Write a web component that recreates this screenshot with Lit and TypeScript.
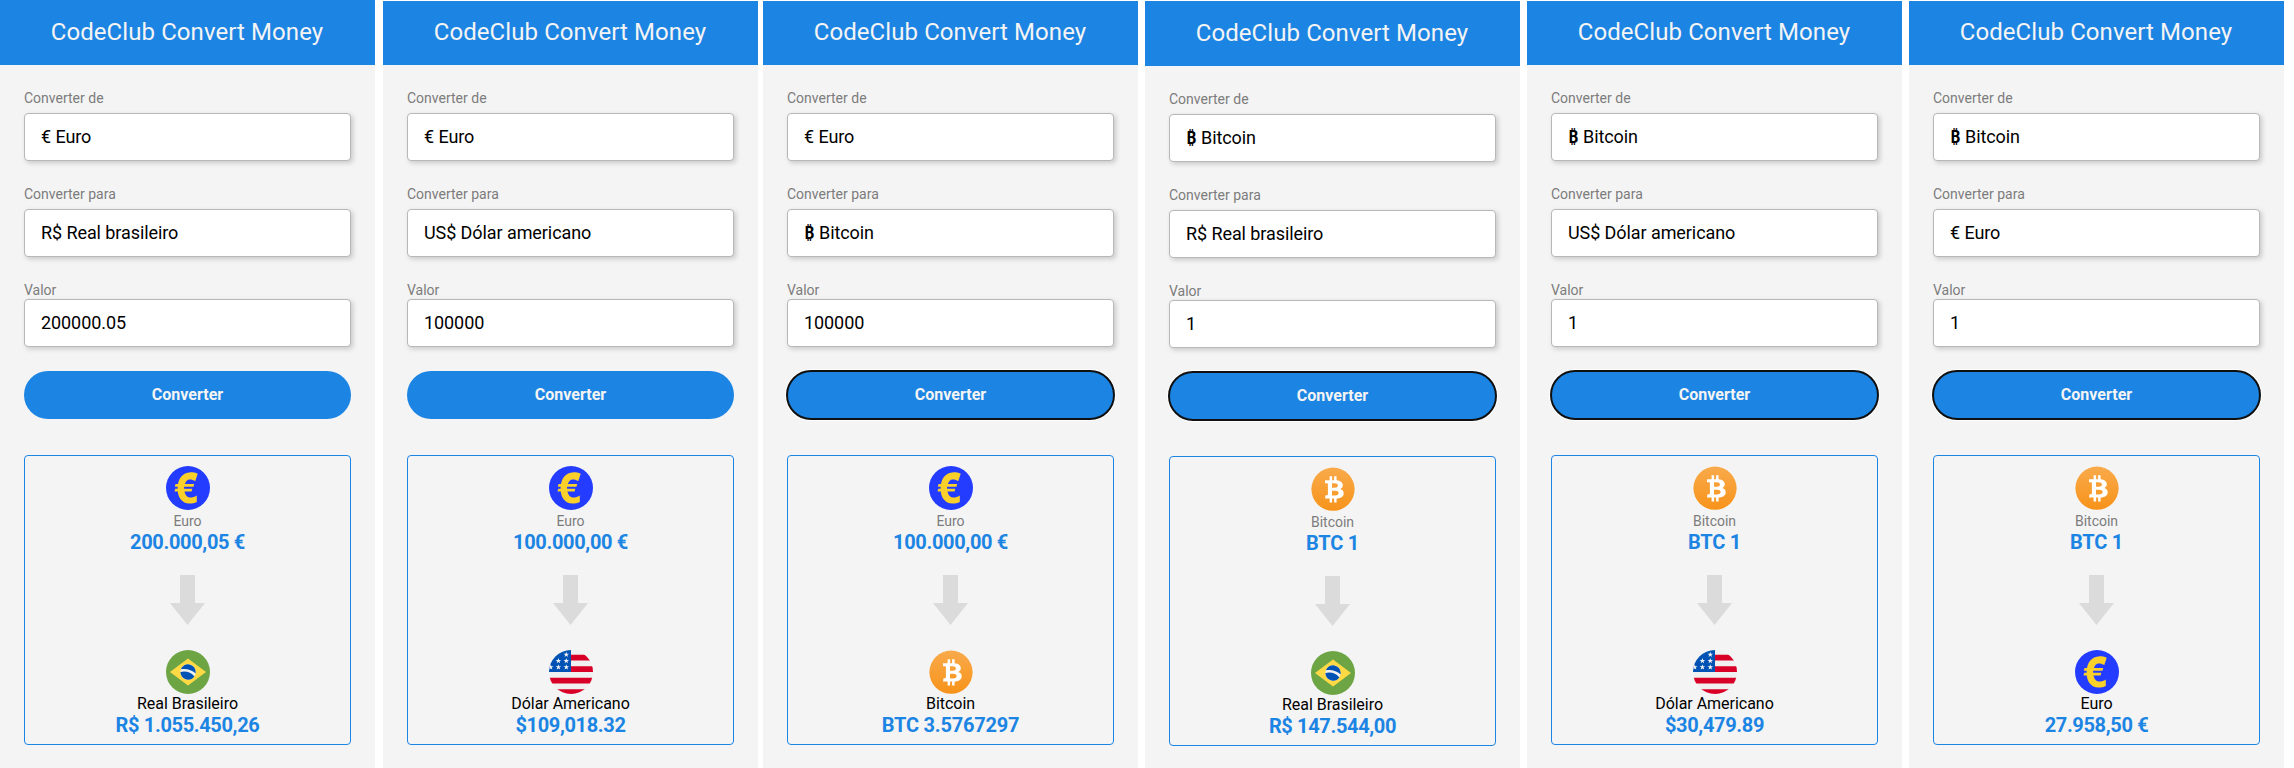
import { LitElement, html, css, svg } from "lit";
import { customElement, property } from "lit/decorators.js";

type Kind = "eur" | "brl" | "usd" | "btc";
interface Conversion {
  from: Kind; to: Kind; value: string; fromAmount: string; toAmount: string;
  focused?: boolean; cls: string;
}

const OPTION: Record<Kind, unknown> = {
  eur: "€ Euro", brl: "R$ Real brasileiro", usd: "US$ Dólar americano",
  btc: html`<span class="sign">₿</span> Bitcoin`,
};
const NAME: Record<Kind, string> = {
  eur: "Euro", brl: "Real Brasileiro", usd: "Dólar Americano", btc: "Bitcoin",
};

const star = (x: number, y: number) => svg`<path fill="#f0f0f0" transform="translate(${x} ${y})"
  d="M0-2.9 .7-.9 2.8-.9 1.1.4 1.7 2.4 0 1.2-1.7 2.4-1.1.4-2.8-.9-.7-.9Z"/>`;

const ICON: Record<Kind, unknown> = {
  eur: svg`<circle cx="22" cy="22" r="22" fill="#233cff"/>
    <path fill="#fbd02b" d="M31.700 7.700 29.300 15C27 13.700 25.200 13.200 23.200 13.500 20.500 14 18.600 16.800 18.200 21.700 18.200 27.500 20.200 31.200 24 31.600 26.300 31.700 28.400 31 30.800 29.500V36.100C28.500 37.200 26.200 37.600 23.500 37.600 15.800 37.400 11.600 31.500 11.600 22.500 11.700 12.500 16.500 6.700 24.500 6.300 27.200 6.300 29.500 6.800 31.700 7.700Z"/>
    <path fill="#233cff" d="M18 20.700H28V22.700H18Z"/>
    <path fill="#fbd02b" d="M9.500 17.900H28.200L27.500 20.800H8.800ZM9.200 22.700H26.300L25.600 25.500H8.500Z"/>`,
  brl: svg`<circle cx="22" cy="22" r="22" fill="#6da544"/>
    <path fill="#ffda44" d="M22 8.600 40 22 22 35.400 4 22Z"/>
    <circle cx="22" cy="22" r="7.700" fill="#f0f0f0"/>
    <path fill="#0052b4" d="M18.200 21.500c-1.300 0-2.600.2-3.800.6.100 4.200 3.500 7.600 7.700 7.600 2.600 0 4.900-1.300 6.300-3.300-2.500-3-6.200-4.900-10.200-4.900ZM29.500 23.300c.1-.4.200-.9.200-1.300a7.700 7.700 0 0 0-14.900-2.700c1.100-.2 2.200-.3 3.400-.3 4.400 0 8.400 1.600 11.300 4.300Z"/>`,
  usd: svg`<clipPath id="disc"><circle cx="22" cy="22" r="22"/></clipPath>
    <g clip-path="url(#disc)"><path fill="#f0f0f0" d="M0 0h44v44H0z"/>
    <path fill="#d80027" d="M21 4.800h23v5.700H21zM21 16.300h23v5.700H21zM0 27.700h44v5.800H0zM0 39.200h44V44H0z"/>
    <path fill="#0052b4" d="M0 0h22v22H0z"/>
    ${star(17.3, 4.6)}${star(9.4, 10.9)}${star(17.3, 10.9)}${star(1.7, 17.2)}${star(9.4, 17.2)}${star(17.3, 17.2)}</g>`,
  btc: svg`<defs><linearGradient id="amber" x1="0" y1="0" x2="0" y2="1">
      <stop offset="0" stop-color="#f9aa4b"/><stop offset="1" stop-color="#f7931a"/></linearGradient></defs>
    <circle cx="22" cy="22.200" r="21.600" fill="url(#amber)"/>
    <path fill="#fff" fill-rule="evenodd" d="M14 13.200h4.600V9.300h2.500v3.900h2V9.300h2.500v4c4 .4 6.200 2.300 6.200 5 0 1.800-.9 3-2.500 3.600 2.200.6 3.400 2.200 3.400 4.300 0 3.200-2.600 5.100-7.100 5.300v4h-2.500v-4h-2v4h-2.500v-4H14l.5-3.200h1.300c.8 0 1.100-.3 1.100-1V17.300c0-.8-.4-1.100-1.200-1.100H14ZM21 16.300v4.400h2.400c2.400 0 3.500-.7 3.500-2.200s-1.200-2.200-3.500-2.200ZM21 23.700v4.700h2.900c2.500 0 3.700-.8 3.700-2.400s-1.200-2.300-3.700-2.300Z"/>`,
};

@customElement("money-screen")
export class MoneyScreen extends LitElement {
  @property({ attribute: false }) data!: Conversion;

  static styles = css`
    :host { display: block; width: 375px; background: #f4f4f4; font-family: Roboto, sans-serif; }
    * { box-sizing: border-box; }
    .bar { height: 65px; background: #1c84e3; color: #f4f4f4; font-size: 24px; line-height: 65px; text-align: center; margin: 0; font-weight: 400; letter-spacing: .08px; padding-right: 1px; }
    .form { display: flex; flex-direction: column; padding: 22px 24px 0; }
    .label { color: #7c7c7c; font-size: 14px; font-weight: 400; line-height: 22px; height: 26px; }
    .label.tight { height: 20px; }
    .field { height: 48px; border: 1px solid #b8b8b8; border-radius: 4px; background: #fff; color: #000;
      box-shadow: 2px 2px 5px rgba(0, 0, 0, .18); font-size: 18px; line-height: 46px; padding: 0 16px; margin-bottom: 22px; white-space: pre; letter-spacing: -.08px; }
    .field.last { margin-bottom: 24px; }
    .sign { font: 600 18px/1 "Noto Sans", "Open Sans", sans-serif; letter-spacing: .3px; }
    .go { height: 48px; border: 0; border-radius: 24px; background: #1c84e3; color: #f4f4f4; font: 700 16px/48px Roboto, sans-serif; padding: 0; }
    .go.focus { outline: 2px solid #101010; outline-offset: -1px; box-shadow: 0 0 0 2px #fff; }
    .result { margin-top: 36px; height: 290px; border: 1px solid #1c84e3; border-radius: 4px; display: flex; flex-direction: column; align-items: center; padding-top: 10px; }
    .coin { width: 44px; height: 44px; display: block; margin-left: 1px; flex: none; }
    .name { font-size: 14px; line-height: 20px; font-weight: 400; color: #7c7c7c; height: 22px; padding-top: 1px; }
    .name.to { font-size: 16px; color: #000; padding-top: 0; height: 21px; letter-spacing: -.03px; }
    .amount { font-size: 20px; line-height: 20px; font-weight: 700; color: #1c84e3; height: 22px; letter-spacing: -.35px; }
    .amount.btc { letter-spacing: -.2px; }
    .arrow { width: 35px; height: 50px; margin: 21px 0 25px; flex: none; }
  `;

  render() {
    const d = this.data;
    return html`
      <h1 class="bar">CodeClub Convert Money</h1>
      <div class="form">
        <label class="label">Converter de</label>
        <div class="field">${OPTION[d.from]}</div>
        <label class="label">Converter para</label>
        <div class="field">${OPTION[d.to]}</div>
        <label class="label tight">Valor</label>
        <div class="field last">${d.value}</div>
        <button class="go ${d.focused ? "focus" : ""}">Converter</button>
        <div class="result">
          <svg class="coin" viewBox="0 0 44 44">${ICON[d.from]}</svg>
          <div class="name">${NAME[d.from]}</div>
          <div class="amount ${d.from}">${d.fromAmount}</div>
          <svg class="arrow" viewBox="0 0 35 50"><path fill="#dbdbdb" d="M10 0h15v28h10L17.500 50 0 28h10z"/></svg>
          <svg class="coin" viewBox="0 0 44 44">${ICON[d.to]}</svg>
          <div class="name to">${NAME[d.to]}</div>
          <div class="amount ${d.to}">${d.toAmount}</div>
        </div>
      </div>`;
  }
}

const SCREENS: Conversion[] = [
  { from: "eur", to: "brl", value: "200000.05", fromAmount: "200.000,05 €", toAmount: "R$ 1.055.450,26", cls: "s1" },
  { from: "eur", to: "usd", value: "100000", fromAmount: "100.000,00 €", toAmount: "$109,018.32", cls: "s2" },
  { from: "eur", to: "btc", value: "100000", fromAmount: "100.000,00 €", toAmount: "BTC 3.5767297", focused: true, cls: "s3" },
  { from: "btc", to: "brl", value: "1", fromAmount: "BTC 1", toAmount: "R$ 147.544,00", focused: true, cls: "s4" },
  { from: "btc", to: "usd", value: "1", fromAmount: "BTC 1", toAmount: "$30,479.89", focused: true, cls: "s5" },
  { from: "btc", to: "eur", value: "1", fromAmount: "BTC 1", toAmount: "27.958,50 €", focused: true, cls: "s6" },
];

@customElement("app-root")
export class AppRoot extends LitElement {
  static styles = css`
    :host { display: flex; height: 768px; overflow: hidden; background: #fff; }
    .s1 { margin-right: 8px; }
    .s2 { margin-right: 5px; }
    .s3, .s4, .s5 { margin-right: 7px; }
    .s2, .s3, .s5, .s6 { clip-path: inset(1px 0 0 0); }
    .s4 { margin-top: 1px; }
  `;
  render() {
    return SCREENS.map((s) => html`<money-screen class=${s.cls} .data=${s}></money-screen>`);
  }
}
